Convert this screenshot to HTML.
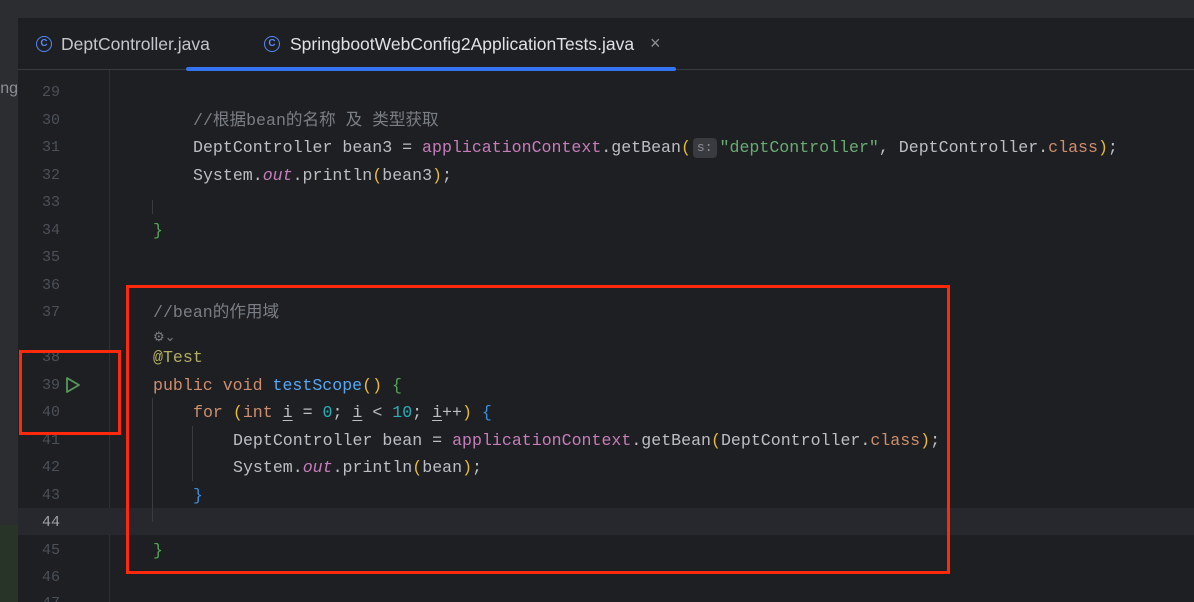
<!DOCTYPE html><html><head><meta charset="utf-8"><style>
html,body{margin:0;width:1194px;height:602px;overflow:hidden}
body{background:#1e1f22;position:relative;font-family:"Liberation Mono","Noto Sans CJK SC",monospace}
.a{position:absolute}
.ln{position:absolute;left:20px;width:40px;text-align:right;color:#4b5059;font-size:15px;line-height:27px}
.c{position:absolute;white-space:pre;font-size:16.6px;line-height:27px;color:#bcbec4}
.k{color:#cf8e6d}.m{color:#56a8f5}.s{color:#6aab73}.n{color:#2aacb8}.cm{color:#7a7e85}.an{color:#b3ae60}.f{color:#c77dbb;font-style:italic}.p{color:#c77dbb}.y{color:#e8ba36}.g{color:#54a857}.b{color:#3c8fe0}
u{text-decoration:underline;text-underline-offset:3px}
</style></head><body>
<div class="a" style="left:0;top:0;width:1194px;height:18px;background:#2b2d30"></div>
<div class="a" style="left:0;top:18px;width:18px;height:584px;background:#2b2d30"></div>
<div class="a" style="left:0;top:525px;width:18px;height:77px;background:#293428"></div>
<div class="a" style="left:0;top:80px;font:16px 'Liberation Sans',sans-serif;color:#8c8f96;width:18px;overflow:hidden;white-space:nowrap;direction:rtl">ng</div>
<!-- gutter -->
<div class="a" style="left:109px;top:70px;width:1px;height:532px;background:#2e3033"></div>
<div class="a" style="left:18px;top:508px;width:1176px;height:27px;background:#26282e"></div>
<div class="a" style="left:152px;top:200px;width:1px;height:14px;background:#393b40"></div>
<div class="a" style="left:152px;top:398px;width:1px;height:124px;background:#393b40"></div>
<div class="a" style="left:192px;top:426px;width:1px;height:55px;background:#393b40"></div>
<div class="ln" style="top:79px">29</div><div class="ln" style="top:107px">30</div><div class="ln" style="top:134px">31</div><div class="ln" style="top:162px">32</div><div class="ln" style="top:189px">33</div><div class="ln" style="top:217px">34</div><div class="ln" style="top:244px">35</div><div class="ln" style="top:272px">36</div><div class="ln" style="top:299px">37</div><div class="ln" style="top:344px">38</div><div class="ln" style="top:372px">39</div><div class="ln" style="top:399px">40</div><div class="ln" style="top:427px">41</div><div class="ln" style="top:454px">42</div><div class="ln" style="top:482px">43</div><div class="ln" style="top:509px;color:#a1a3ab">44</div><div class="ln" style="top:537px">45</div><div class="ln" style="top:564px">46</div><div class="ln" style="top:590px">47</div>
<svg class="a" style="left:64px;top:376px" width="18" height="18"><path d="M3 2 L15 9 L3 16 Z" fill="none" stroke="#57965c" stroke-width="1.8" stroke-linejoin="round"/></svg>
<!-- tabs -->
<div class="a" style="left:18px;top:18px;width:1176px;height:51px;background:#1e1f22"></div>
<div class="a" style="left:18px;top:69px;width:1176px;height:1px;background:#393b40"></div>
<div class="a" style="left:36px;top:36px;width:14px;height:14px;border:1.5px solid #548af7;border-radius:50%;color:#548af7;font:bold 10px 'Liberation Sans';text-align:center;line-height:14px">C</div>
<div class="a" style="left:61px;top:34px;font:17.5px 'Liberation Sans',sans-serif;color:#c4c6cc">DeptController.java</div>
<div class="a" style="left:264px;top:36px;width:14px;height:14px;border:1.5px solid #548af7;border-radius:50%;color:#548af7;font:bold 10px 'Liberation Sans';text-align:center;line-height:14px">C</div>
<div class="a" style="left:290px;top:34px;font:17.5px 'Liberation Sans',sans-serif;color:#dfe1e5">SpringbootWebConfig2ApplicationTests.java</div>
<div class="a" style="left:650px;top:33px;font:18px 'Liberation Sans',sans-serif;color:#8c8f96">×</div>
<div class="a" style="left:186px;top:67px;width:490px;height:4px;background:#3574f0;border-radius:2px"></div>
<!-- code -->
<div class="c" style="left:193px;top:107px"><span class="cm">//根据bean的名称 及 类型获取</span></div>
<div class="c" style="left:193px;top:134px">DeptController bean3 = <span class="p">applicationContext</span>.getBean<span class="y">(</span><span style="display:inline-block;background:#393b40;color:#8c8f96;font-size:13px;line-height:20px;padding:0 4px;border-radius:4px;margin:0 3px 0 2px;vertical-align:1px">s:</span><span class="s">"deptController"</span>, DeptController.<span class="k">class</span><span class="y">)</span>;</div>
<div class="c" style="left:193px;top:162px">System.<span class="f">out</span>.println<span class="y">(</span>bean3<span class="y">)</span>;</div>
<div class="c" style="left:153px;top:217px"><span class="g">}</span></div>
<div class="c" style="left:153px;top:299px"><span class="cm">//bean的作用域</span></div>
<div class="c" style="left:153px;top:324px;font-size:13px;color:#7a7e85">⚙⌄</div>
<div class="c" style="left:153px;top:344px"><span class="an">@Test</span></div>
<div class="c" style="left:153px;top:372px"><span class="k">public void</span> <span class="m">testScope</span><span class="y">()</span> <span class="g">{</span></div>
<div class="c" style="left:193px;top:399px"><span class="k">for</span> <span class="y">(</span><span class="k">int</span> <u>i</u> = <span class="n">0</span>; <u>i</u> &lt; <span class="n">10</span>; <u>i</u>++<span class="y">)</span> <span class="b">{</span></div>
<div class="c" style="left:233px;top:427px">DeptController bean = <span class="p">applicationContext</span>.getBean<span class="y">(</span>DeptController.<span class="k">class</span><span class="y">)</span>;</div>
<div class="c" style="left:233px;top:454px">System.<span class="f">out</span>.println<span class="y">(</span>bean<span class="y">)</span>;</div>
<div class="c" style="left:193px;top:482px"><span class="b">}</span></div>
<div class="c" style="left:153px;top:537px"><span class="g">}</span></div>
<!-- red boxes -->
<div class="a" style="left:126px;top:285px;width:818px;height:283px;border:3px solid #ff2a0e"></div>
<div class="a" style="left:19px;top:350px;width:96px;height:79px;border:3px solid #ff2a0e"></div>
</body></html>
